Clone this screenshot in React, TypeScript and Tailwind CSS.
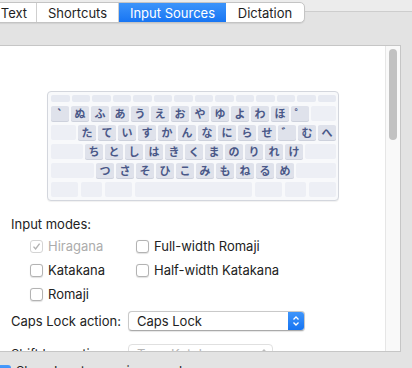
import React from "react";

const FONT = { fontFamily: "Inter, 'Noto Sans', 'Liberation Sans', sans-serif" };
const JP = { fontFamily: "'Noto Sans CJK JP', 'Noto Sans', sans-serif" };

function Key({ label, w }: { label?: string; w?: number }) {
  const labeled = label !== undefined;
  return (
    <div
      className={
        labeled
          ? "h-full rounded-[2px] bg-[#dfe2eb] shadow-[0_1px_0_#cdd1dc] flex items-center justify-center text-[11px] font-bold text-[#4a5888] leading-none"
          : "h-full rounded-[2px] bg-[#edeff5]"
      }
      style={{ width: w ?? 18, ...JP }}
    >
      {label}
    </div>
  );
}

function Checkbox({ checked, disabled, blue }: { checked?: boolean; disabled?: boolean; blue?: boolean }) {
  if (blue) {
    return (
      <div className="w-[13px] h-[13px] rounded-[3px] bg-gradient-to-b from-[#4a9cfb] to-[#1673f2] flex items-center justify-center shrink-0">
        <svg width="9" height="9" viewBox="0 0 9 9">
          <path d="M1.5 4.8 L3.6 7 L7.5 1.8" stroke="white" strokeWidth="1.6" fill="none" />
        </svg>
      </div>
    );
  }
  return (
    <div
      className={
        disabled
          ? "w-[13px] h-[13px] rounded-[3px] border border-[#d4d4d4] bg-white flex items-center justify-center shrink-0"
          : "w-[13px] h-[13px] rounded-[3px] border border-[#b3b3b3] bg-white shadow-[0_0.5px_1px_rgba(0,0,0,0.12)] flex items-center justify-center shrink-0"
      }
    >
      {checked && (
        <svg width="9" height="9" viewBox="0 0 9 9">
          <path d="M1.5 4.6 L3.6 7 L7.6 1.6" stroke="#b2b2b2" strokeWidth="1.4" fill="none" />
        </svg>
      )}
    </div>
  );
}

function CheckRow({ label, checked, disabled }: { label: string; checked?: boolean; disabled?: boolean }) {
  return (
    <div className="h-[24px] flex items-center gap-[5px]">
      <Checkbox checked={checked} disabled={disabled} />
      <span className={disabled ? "text-[13px] text-[#acacac]" : "text-[13px] text-[#222]"}>{label}</span>
    </div>
  );
}

export default function App() {
  const row1 = ["`", "ぬ", "ふ", "あ", "う", "え", "お", "や", "ゆ", "よ", "わ", "ほ", "゜"];
  const row2 = ["た", "て", "い", "す", "か", "ん", "な", "に", "ら", "せ", "゛", "む", "へ"];
  const row3 = ["ち", "と", "し", "は", "き", "く", "ま", "の", "り", "れ", "け"];
  const row4 = ["つ", "さ", "そ", "ひ", "こ", "み", "も", "ね", "る", "め"];
  const row5 = [27, 21, 27, 117, 27, 21, 27];

  return (
    <div className="w-[412px] h-[368px] overflow-hidden bg-[#ececec] relative leading-[16px]" style={FONT}>
      {/* tab control */}
      <div className="relative z-10 pt-[2px] flex">
        <div className="flex h-[21px] -ml-[9px] rounded-[5px] border border-[#c4c4c4] bg-white shadow-[0_1px_1px_rgba(0,0,0,0.08)] overflow-hidden text-[13px] text-[#1e1e1e]">
          <div className="w-[45px] flex items-center justify-center border-r border-[#cfcfcf]">Text</div>
          <div className="w-[82px] flex items-center justify-center border-r border-[#cfcfcf]">Shortcuts</div>
          <div className="w-[107px] flex items-center justify-center bg-gradient-to-b from-[#3c94fa] to-[#1775f3] text-white">
            Input Sources
          </div>
          <div className="w-[78px] flex items-center justify-center">Dictation</div>
        </div>
      </div>

      {/* tab box */}
      <div className="-mt-[12px] border-t border-[#cdcdcd] bg-[#e3e3e3] pt-[33px] h-[400px]">
        <div className="-ml-[1px] w-[402px] h-[307px] bg-white border border-[#c6c6c6] flex overflow-hidden">
          {/* content */}
          <div className="flex-1 overflow-hidden">
            <div className="mt-[45px] ml-[47px] w-[292px] h-[110px] rounded-[4px] border border-[#d3d6dd] bg-[#f8f9fb] shadow-[0_1px_1px_rgba(0,0,0,0.06)] pt-[3px] pl-[3px] pr-[2px] flex flex-col gap-[3.5px]">
              <div className="h-[7px] flex gap-[2px]">
                {Array.from({ length: 14 }).map((_, i) => (
                  <div key={i} className="flex-1 h-full rounded-[2px] bg-[#e6e9f1]" />
                ))}
              </div>
              <div className="h-[15.5px] flex gap-[2px]">
                {row1.map((k) => (
                  <Key key={k} label={k} />
                ))}
                <Key w={25} />
              </div>
              <div className="h-[15.5px] flex gap-[2px]">
                <Key w={25} />
                {row2.map((k) => (
                  <Key key={k} label={k} />
                ))}
              </div>
              <div className="h-[15.5px] flex gap-[2px]">
                <Key w={32} />
                {row3.map((k) => (
                  <Key key={k} label={k} />
                ))}
                <Key w={31} />
              </div>
              <div className="h-[15.5px] flex gap-[2px]">
                <Key w={43} />
                {row4.map((k) => (
                  <Key key={k} label={k} />
                ))}
                <Key w={40} />
              </div>
              <div className="h-[15.5px] flex gap-[3px]">
                {row5.map((w, i) => (
                  <Key key={i} w={w} />
                ))}
              </div>
            </div>

            <div className="pl-[11px]">
              <div className="mt-[14.5px] text-[13px] text-[#222]">Input modes:</div>
              <div className="mt-[2.5px] ml-[19px] grid grid-cols-[106px_auto]">
                <CheckRow label="Hiragana" checked disabled />
                <CheckRow label="Full-width Romaji" />
                <CheckRow label="Katakana" />
                <CheckRow label="Half-width Katakana" />
                <CheckRow label="Romaji" />
              </div>

              <div className="mt-[5px] h-[20px] flex items-center">
                <div className="w-[117px] text-[13px] text-[#222]">Caps Lock action:</div>
                <div className="w-[177px] h-[20px] flex rounded-[4px] border border-[#c9c9c9] border-b-[#aaaaaa] bg-white overflow-hidden shadow-[0_0.5px_1px_rgba(0,0,0,0.1)]">
                  <div className="flex-1 pl-[8px] flex items-center text-[13px] text-[#1e1e1e]">Caps Lock</div>
                  <div className="w-[16px] bg-gradient-to-b from-[#3e95fb] to-[#1574f2] flex items-center justify-center">
                    <svg width="8" height="12" viewBox="0 0 8 12">
                      <path d="M1.5 4.5 L4 2 L6.5 4.5 M1.5 7.5 L4 10 L6.5 7.5" stroke="white" strokeWidth="1.3" fill="none" />
                    </svg>
                  </div>
                </div>
              </div>

              <div className="mt-[13px] h-[20px] flex items-center">
                <div className="w-[117px] text-[13px] text-[#222]">Shift key action:</div>
                <div className="w-[145px] h-[20px] flex rounded-[4px] border border-[#e0e0e0] bg-white">
                  <div className="flex-1 pl-[8px] flex items-center text-[13px] text-[#b5b5b5]">Type Katakana</div>
                  <div className="w-[16px] flex items-center justify-center">
                    <svg width="8" height="12" viewBox="0 0 8 12">
                      <path d="M1.5 4.5 L4 2 L6.5 4.5 M1.5 7.5 L4 10 L6.5 7.5" stroke="#bdbdbd" strokeWidth="1.3" fill="none" />
                    </svg>
                  </div>
                </div>
              </div>
            </div>
          </div>

          {/* scrollbar */}
          <div className="w-[15px] h-full border-l border-[#e6e6e6] bg-[#f9f9f9] pt-[3px] pl-[3px]">
            <div className="w-[8px] h-[91px] rounded-full bg-[#c2c2c2]" />
          </div>
        </div>

        <div className="mt-[11px] -ml-[2px] flex items-center gap-[5px] h-[16px]">
          <Checkbox blue />
          <span className="text-[13px] text-[#222]">Show Input menu in menu bar</span>
        </div>
      </div>
    </div>
  );
}
